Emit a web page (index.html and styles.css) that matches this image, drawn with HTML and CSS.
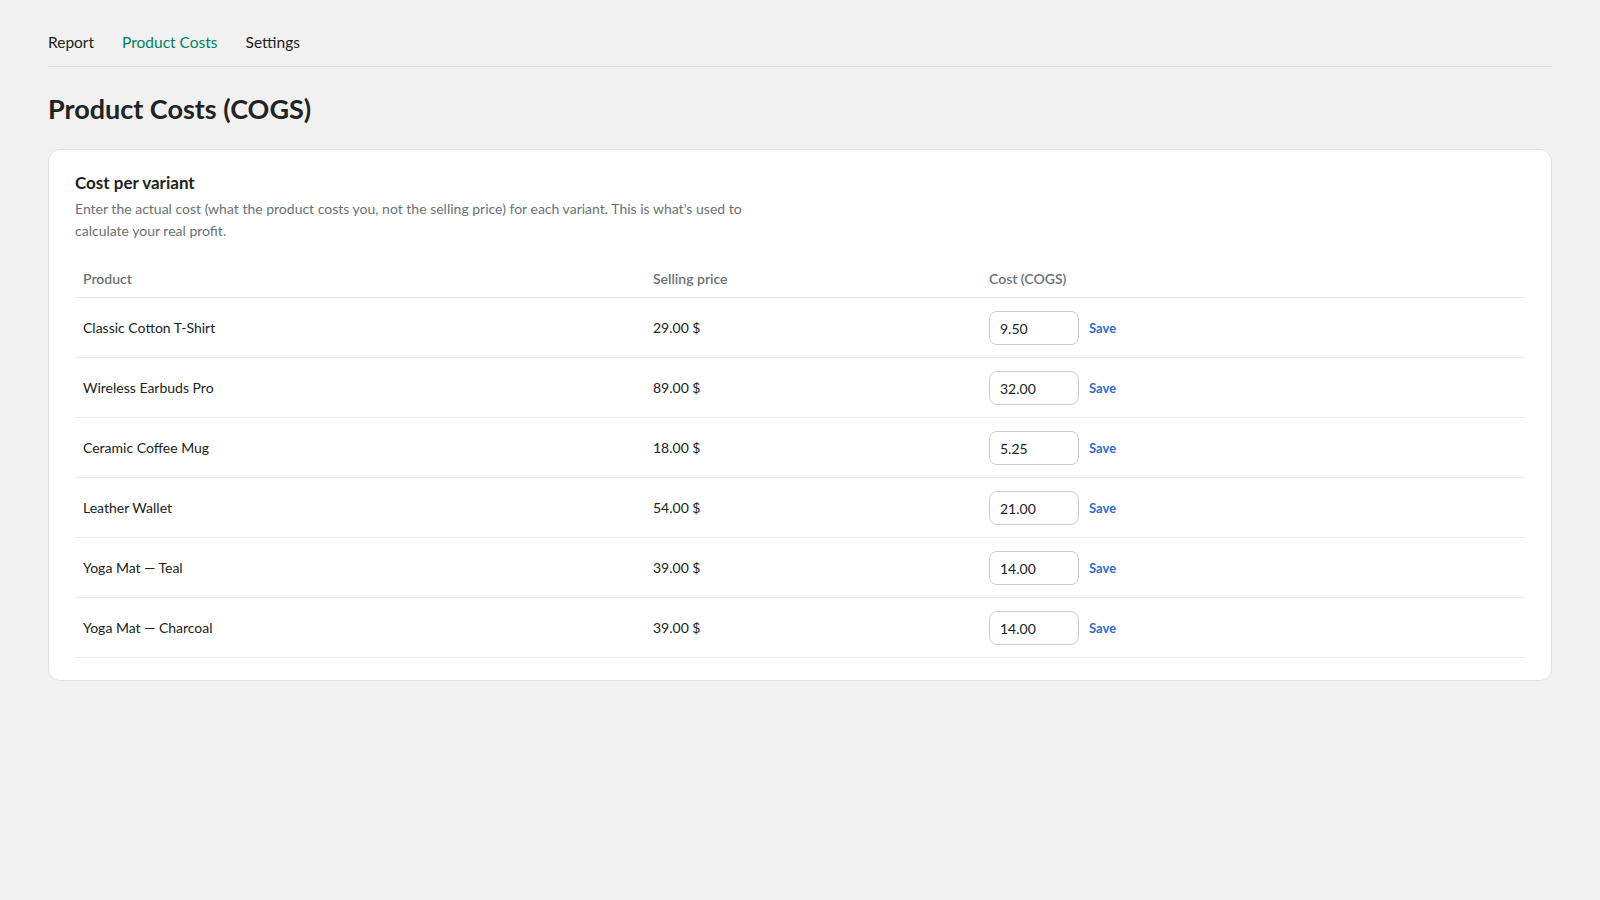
FILE: index.html
```html
<!DOCTYPE html>
<html lang="en">
<head>
  <meta charset="UTF-8" />
  <meta name="viewport" content="width=device-width, initial-scale=1.0"/>
  <title>Product Costs</title>
  <link rel="stylesheet" href="styles.css">
</head>
<body>
  <div class="page">
    <nav class="tabs">
      <a href="#">Report</a>
      <a href="#" class="active">Product Costs</a>
      <a href="#">Settings</a>
    </nav>

    <h1>Product Costs (COGS)</h1>

    <div class="card">
      <h2>Cost per variant</h2>
      <p class="desc">Enter the actual cost (what the product costs you, not the selling price) for each variant. This is what's used to calculate your real profit.</p>

      <table class="costs">
        <colgroup>
          <col class="col-product">
          <col class="col-price">
          <col>
        </colgroup>
        <thead>
          <tr>
            <th>Product</th>
            <th>Selling price</th>
            <th>Cost (COGS)</th>
          </tr>
        </thead>
        <tbody>
          <tr>
            <td>Classic Cotton T-Shirt</td>
            <td>29.00 $</td>
            <td><input type="text" value="9.50"><a href="#" class="save">Save</a></td>
          </tr>
          <tr>
            <td>Wireless Earbuds Pro</td>
            <td>89.00 $</td>
            <td><input type="text" value="32.00"><a href="#" class="save">Save</a></td>
          </tr>
          <tr>
            <td>Ceramic Coffee Mug</td>
            <td>18.00 $</td>
            <td><input type="text" value="5.25"><a href="#" class="save">Save</a></td>
          </tr>
          <tr>
            <td>Leather Wallet</td>
            <td>54.00 $</td>
            <td><input type="text" value="21.00"><a href="#" class="save">Save</a></td>
          </tr>
          <tr>
            <td>Yoga Mat — Teal</td>
            <td>39.00 $</td>
            <td><input type="text" value="14.00"><a href="#" class="save">Save</a></td>
          </tr>
          <tr>
            <td>Yoga Mat — Charcoal</td>
            <td>39.00 $</td>
            <td><input type="text" value="14.00"><a href="#" class="save">Save</a></td>
          </tr>
        </tbody>
      </table>
    </div>
  </div>
</body>
</html>
```

FILE: styles.css
```css
body {
  margin: 0;
  background: #f1f1f1;
  font-family: Lato, "Open Sans", sans-serif;
  color: #202223;
}
.page {
  padding: 30px 48px;
}
.tabs {
  display: flex;
  gap: 28px;
  padding-bottom: 12px;
  border-bottom: 1px solid #dcdcdc;
}
.tabs a {
  color: #202223;
  text-decoration: none;
  font-size: 15.5px;
  line-height: 24px;
}
.tabs a.active {
  color: #008060;
}
h1 {
  margin: 26px 0 24px;
  font-size: 27px;
  line-height: 32px;
  font-weight: 700;
}
.card {
  background: #fff;
  border: 1px solid #e1e1e1;
  border-radius: 12px;
  padding: 22px 26px 22px;
}
.card h2 {
  margin: 0;
  font-size: 17px;
  line-height: 22px;
  font-weight: 700;
}
.desc {
  margin: 4px 0 0;
  max-width: 700px;
  font-size: 14px;
  line-height: 22px;
  color: #6d7175;
}
.costs {
  width: 100%;
  margin-top: 16px;
  border-collapse: collapse;
  table-layout: fixed;
  font-size: 14px;
}
.col-product {
  width: 570px;
}
.col-price {
  width: 336px;
}
.costs th {
  text-align: left;
  font-weight: 600;
  color: #6d7175;
  line-height: 18px;
  padding: 12px 8px 9px;
  border-bottom: 1px solid #e1e3e5;
}
.costs td {
  padding: 13px 8px 12px;
  line-height: 18px;
  border-bottom: 1px solid #e9eaeb;
  vertical-align: middle;
}
.costs input {
  box-sizing: border-box;
  width: 90px;
  height: 34px;
  padding: 0 10px;
  border: 1px solid #c9cccf;
  border-radius: 8px;
  font: inherit;
  color: #202223;
  vertical-align: middle;
}
.save {
  margin-left: 10px;
  font-size: 13px;
  color: #2c6ecb;
  font-weight: 700;
  text-decoration: none;
  vertical-align: middle;
}
```
